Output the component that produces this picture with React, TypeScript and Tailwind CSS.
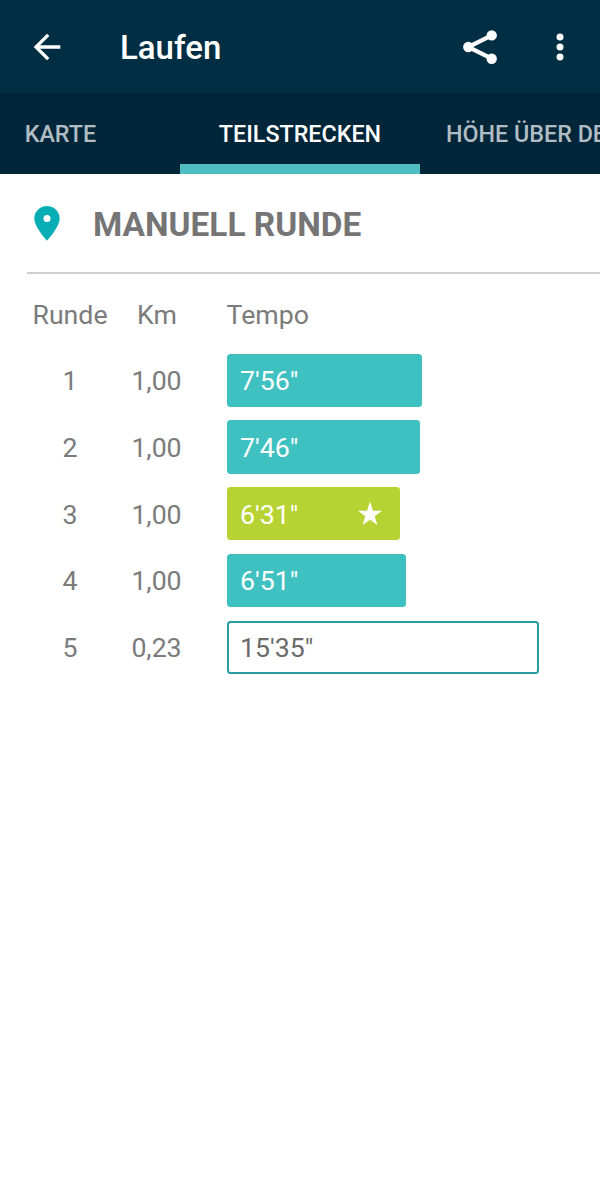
const rows = [
  { lap: '1', km: '1,00', pace: "7'56\"", width: 195 },
  { lap: '2', km: '1,00', pace: "7'46\"", width: 193 },
  { lap: '3', km: '1,00', pace: "6'31\"", width: 173.5, best: true },
  { lap: '4', km: '1,00', pace: "6'51\"", width: 179 },
  { lap: '5', km: '0,23', pace: "15'35\"", width: 312.5, partial: true },
];

function barStyle(row: (typeof rows)[number]) {
  if (row.best) return 'bg-[#b6d333] text-white';
  if (row.partial) return 'border-2 border-[#259fa3] bg-white text-[#6b6b6b]';
  return 'bg-[#3fc1c2] text-white';
}

export default function App() {
  return (
    <div className="h-[1201px] w-[600px] overflow-hidden bg-white font-['Roboto',sans-serif] text-[#7b7b7b]">
      <header className="flex h-[93px] items-center bg-[#022e44] text-white">
        <svg className="ml-[26.5px] size-10" viewBox="0 0 24 24" fill="currentColor">
          <path d="M20 11H7.83l5.59-5.59L12 4l-8 8 8 8 1.41-1.41L7.83 13H20v-2z" />
        </svg>
        <h1 className="ml-[53.5px] pt-[3px] text-[33px] font-medium">Laufen</h1>
        <svg className="ml-auto size-10" viewBox="0 0 40 40" fill="none" stroke="currentColor" strokeWidth="4.2">
          <path d="M31.8 8.4 8.2 20l23.6 11.6" />
          <g fill="currentColor" stroke="none">
            <circle cx="31.7" cy="8.4" r="5.2" />
            <circle cx="8.3" cy="20" r="5.2" />
            <circle cx="31.7" cy="31.8" r="5.2" />
          </g>
        </svg>
        <svg className="mr-5 ml-10 size-10" viewBox="0 0 24 24" fill="currentColor">
          <circle cx="12" cy="6" r="2.1" />
          <circle cx="12" cy="12" r="2.1" />
          <circle cx="12" cy="18" r="2.1" />
        </svg>
      </header>
      <nav className="flex h-[80.5px] overflow-hidden bg-[#022639] text-[23.3px] font-medium whitespace-nowrap text-[#b1bdc4]">
        <div className="flex w-[180px] shrink-0 items-center pt-[3px] pl-[24.7px]">KARTE</div>
        <div className="flex w-60 shrink-0 items-center justify-center border-b-10 border-[#4dbfc2] pt-[13px] text-white">TEILSTRECKEN</div>
        <div className="flex shrink-0 items-center pt-[3px] pl-[26px]">HÖHE ÜBER DEM MEER</div>
      </nav>
      <section className="flex h-[98px] items-center">
        <svg className="ml-[26.5px] size-10" viewBox="0 0 24 24" fill="#05adb5">
          <path fillRule="evenodd" d="M12 1.8C7.8 1.8 4.4 5.1 4.4 9.3c0 5.2 7.6 13.3 7.6 13.3s7.6-8.1 7.6-13.3c0-4.2-3.4-7.5-7.6-7.5zm0 9.6a2.1 2.1 0 1 1 0-4.2 2.1 2.1 0 0 1 0 4.2z" />
        </svg>
        <h2 className="ml-[26.5px] pt-[4.5px] text-[33.4px] font-bold text-[#757575]">MANUELL RUNDE</h2>
      </section>
      <main className="ml-[27px] border-t-2 border-[#cecece] pt-[19px] text-[26.7px]">
        <div className="flex h-[46px] items-center">
          <span className="w-[86px] text-center">Runde</span>
          <span className="w-[87px] pl-px text-center">Km</span>
          <span className="ml-[26.5px]">Tempo</span>
        </div>
        <div className="mt-[15px] flex flex-col gap-[13.5px]">
          {rows.map((row) => (
            <div key={row.lap} className="flex h-[53.25px] items-center">
              <span className="w-[86px] pt-0.5 text-center">{row.lap}</span>
              <span className="w-[87px] pt-0.5 text-center">{row.km}</span>
              <div
                className={`ml-[26.5px] flex h-full items-center justify-between rounded-[3.5px] ${row.partial ? 'pl-[11.5px]' : 'pl-[13.5px]'} ${barStyle(row)}`}
                style={{ width: row.width }}
              >
                <span className="pt-0.5">{row.pace}</span>
                {row.best && (
                  <svg className="mr-4 size-7" viewBox="0 0 28 28" fill="currentColor">
                    <path d="M14 1.5 16.9 10.7H26L18.7 16.3 21.4 25 14 19.7 6.6 25 9.3 16.3 2 10.7H11.1Z" />
                  </svg>
                )}
              </div>
            </div>
          ))}
        </div>
      </main>
    </div>
  );
}
